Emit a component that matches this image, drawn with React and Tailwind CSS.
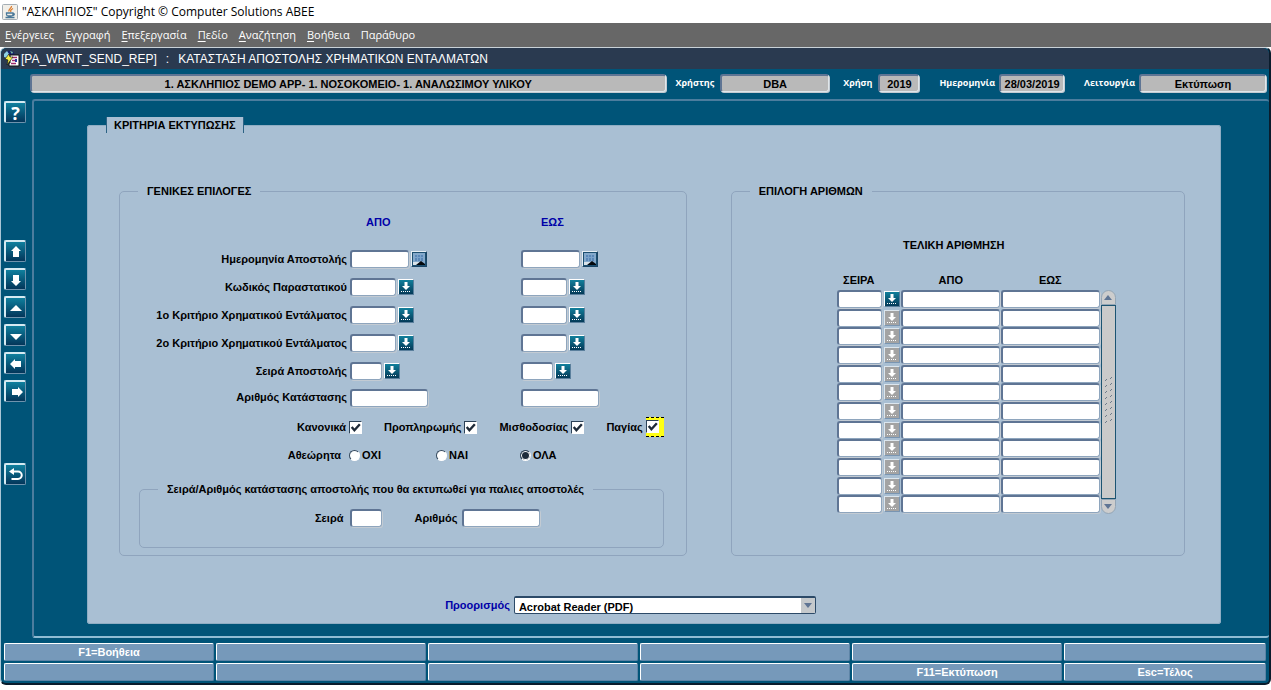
import { useState } from 'react';

const MENU = ['Ενέργειες', 'Εγγραφή', 'Επεξεργασία', 'Πεδίο', 'Αναζήτηση', 'Βοήθεια'];

const FUNCTION_KEYS = [
    'F1=Βοήθεια', '', '', '', '', '',
    '', '', '', '', 'F11=Εκτύπωση', 'Esc=Τέλος',
];

const RANGE_ROWS = [
    { id: 'date', label: 'Ημερομηνία Αποστολής', width: 'w-[59px]', picker: 'calendar' },
    { id: 'doc', label: 'Κωδικός Παραστατικού', width: 'w-[46px]', picker: 'list' },
    { id: 'crit1', label: '1ο Κριτήριο Χρηματικού Εντάλματος', width: 'w-[46px]', picker: 'list' },
    { id: 'crit2', label: '2ο Κριτήριο Χρηματικού Εντάλματος', width: 'w-[46px]', picker: 'list' },
    { id: 'series', label: 'Σειρά Αποστολής', width: 'w-8', picker: 'list' },
    { id: 'number', label: 'Αριθμός Κατάστασης', width: 'w-[78px]', picker: null },
];

const NAV_ICONS = [
    { name: 'Προηγούμενη εγγραφή', d: 'M8 2l5 5h-2v6H5V7H3z' },
    { name: 'Επόμενη εγγραφή', d: 'M8 14l5-5h-2V3H5v6H3z' },
    { name: 'Προηγούμενη σελίδα', d: 'M8 5l6 6H2z' },
    { name: 'Επόμενη σελίδα', d: 'M8 12l6-6H2z' },
    { name: 'Προηγούμενο πεδίο', d: 'M2 8l5-5v2h6v6H7v2z' },
    { name: 'Επόμενο πεδίο', d: 'M15 8l-5-5v2H4v6h6v2z' },
];

const FRAME = 'h-[18px] rounded-[3px] border-t-2 border-l-2 border-r border-b border-t-[#5f7594] border-l-[#5f7594] shadow-[1px_1px_0_#c3cbd3] outline-none';
const FIELD = `${FRAME} border-r-[#8ea5bd] border-b-[#8ea5bd] bg-white px-1`;
const INFO = `${FRAME} border-r-[#dfe6ea] border-b-[#dfe6ea] bg-[#b9b9b9] text-center`;

function JavaIcon() {
    return (
        <svg width="16" height="16" viewBox="0 0 16 16" aria-hidden="true">
            <rect x="0.5" y="0.5" width="15" height="15" rx="1" fill="#f1efe9" stroke="#a5aeb5" />
            <path d="M9.500 2C10 4 6 5 7 7.500M11 4.500C9 5.500 8 6.500 9 8" fill="none" stroke="#dd7a28" strokeWidth="1.300" />
            <path d="M4.500 9h6.500v1.500c0 1-1 1.500-2 1.500H6.500c-1 0-2-.5-2-1.500zM11 9.500c2 0 1.500 2-.5 2M3.500 13.500h9" fill="none" stroke="#4a7898" strokeWidth="1.300" />
        </svg>
    );
}

function FormIcon() {
    return (
        <svg width="17" height="17" viewBox="0 0 17 17" aria-hidden="true">
            <circle cx="7" cy="5" r="4.500" fill="#15206b" />
            <path d="M1 4l3-3 2 3-2 4-3-1z" fill="#8fd0e6" />
            <path d="M7 1l3 1-1 2z" fill="#7fc4a0" />
            <path d="M7 5h9v11H6v-3h1z" fill="#fff" stroke="#111" />
            <path d="M9 7.500h5M9 10.500h5M8 13.500h5" stroke="#a02c6c" strokeWidth="1.500" />
            <path d="M12 9h2v3h-2z" fill="#2b39a0" />
            <path d="M2 9l4-5 1 3h3l-6 8 1-5z" fill="#f6ef4a" stroke="#111" strokeWidth="0.600" />
        </svg>
    );
}

function ListButton({ label, disabled }) {
    return (
        <button
            type="button"
            aria-label={label}
            disabled={disabled}
            className={`block size-4 shrink-0 border ${disabled
                ? 'border-t-[#dce6ee] border-l-[#dce6ee] border-r-[#7995b2] border-b-[#7995b2] bg-[#a3a3a3]'
                : 'border-t-white border-l-white border-r-[#5a7f9c] border-b-[#5a7f9c] bg-linear-to-b from-[#12809c] to-[#053a58]'
                }`}
        >
            <svg width="14" height="14" viewBox="0 0 14 14" aria-hidden="true">
                <path d="M5.500 2h3v4H11L7 10 3 6h2.500z" fill="#fff" />
                <path d="M2 11.500h10" stroke="#fff" strokeDasharray="1 1" />
            </svg>
        </button>
    );
}

function CalendarButton({ label }) {
    return (
        <button type="button" aria-label={label} className="block size-4 shrink-0 border border-t-[#e6eef4] border-l-[#e6eef4] border-r-[#1b4566] border-b-[#1b4566] bg-[#1d4f70]">
            <svg width="14" height="14" viewBox="0 0 14 14" aria-hidden="true">
                <path d="M1 1h12v12H1z" fill="#84a9cb" />
                <path d="M3 3h8v6H3z" fill="#5b88b8" />
                <path d="M3 5.500h8M5.500 3v6M8.500 3v6" stroke="#7ba3cb" />
                <path d="M1 10h7l-3 3H1z" fill="#d9e3ea" />
                <path d="M4 13l5-4 4 3v1z" fill="#05080c" />
            </svg>
        </button>
    );
}

function NavButton({ label, children }) {
    return (
        <button
            type="button"
            aria-label={label}
            className="grid size-[22px] place-items-center rounded-xs border-t-2 border-l-2 border-r border-b border-t-[#d5eaf2] border-l-[#d5eaf2] border-r-[#6f93ad] border-b-[#6f93ad] bg-linear-to-b from-[#10809e] to-[#04365a]"
        >
            {children}
        </button>
    );
}

function RangeCell({ row, side, label }) {
    return (
        <div className="flex items-center gap-[2px]">
            <input id={`${row.id}-${side}`} type="text" aria-label={`${row.label} ${label}`} className={`${FIELD} ${row.width}`} />
            {row.picker === 'calendar' && <CalendarButton label="Ημερολόγιο" />}
            {row.picker === 'list' && <ListButton label="Λίστα τιμών" />}
        </div>
    );
}

function Check({ label, focused }) {
    return (
        <label className="flex h-5 items-center gap-[3px]">
            {label}
            <span className={focused ? 'h-5 w-[18px] border-y border-dashed border-black bg-[#ffff14] pt-[2px]' : ''}>
                <span className="grid size-[13px]">
                    <input type="checkbox" defaultChecked className="peer col-start-1 row-start-1 size-[13px] appearance-none border border-t-[#2c4258] border-l-[#2c4258] border-r-white border-b-white bg-white" />
                    <svg viewBox="0 0 12 12" className="pointer-events-none invisible col-start-1 row-start-1 size-[13px] peer-checked:visible" aria-hidden="true">
                        <path d="M2.500 5.500l2.500 3L10 3" fill="none" stroke="#1e2a38" strokeWidth="2.200" />
                    </svg>
                </span>
            </span>
        </label>
    );
}

function Radio({ label, value, current, onChange }) {
    return (
        <label className="flex items-center gap-[2px]">
            <input
                type="radio"
                name="unviewed"
                value={value}
                checked={current === value}
                onChange={() => onChange(value)}
                className="size-[11px] appearance-none rounded-full border border-t-[#33475c] border-l-[#33475c] border-r-white border-b-white bg-white checked:bg-[#1f2d3c] checked:shadow-[inset_0_0_0_1px_white]"
            />
            {label}
        </label>
    );
}

function InfoField({ id, label, value, width, space }) {
    return (
        <div className={`flex items-center ${space}`}>
            <label htmlFor={id} className="font-['Open_Sans',sans-serif] text-[9px] text-white">{label}</label>
            <input id={id} readOnly value={value} className={`${INFO} ${width}`} />
        </div>
    );
}

function GeneralOptions() {
    const [unviewed, setUnviewed] = useState('all');

    return (
        <fieldset className="h-[373px] rounded-[5px] border border-[#8fa4bd] pl-[18px]">
            <legend className="h-4 px-[9px] leading-4">ΓΕΝΙΚΕΣ ΕΠΙΛΟΓΕΣ</legend>

            <div className="-ml-[18px] grid grid-cols-[227px_168px_1fr] auto-rows-[28px] items-center gap-x-[3px] pt-[9px]">
                <span />
                <span className="pl-4 text-[#0000a8]">ΑΠΟ</span>
                <span className="pl-5 text-[#0000a8]">ΕΩΣ</span>
            </div>
            <div className="-ml-[18px] grid grid-cols-[227px_168px_1fr] grid-rows-[28px_28px_28px_28px_28px_25px] items-center gap-x-[3px] pt-[9px]">
                {RANGE_ROWS.map((row) => (
                    <div key={row.id} className="contents">
                        <label htmlFor={`${row.id}-from`} className="text-right whitespace-nowrap">{row.label}</label>
                        <RangeCell row={row} side="from" label="από" />
                        <RangeCell row={row} side="to" label="έως" />
                    </div>
                ))}
            </div>

            <div className="mt-[7px] mr-[22px] flex justify-between pl-[159px]">
                <Check label="Κανονικά" />
                <Check label="Προπληρωμής" />
                <Check label="Μισθοδοσίας" />
                <Check label="Παγίας" focused />
            </div>

            <div role="radiogroup" aria-label="Αθεώρητα" className="-ml-[18px] mt-2 grid h-5 grid-cols-[221px_79px_76px_1fr] items-center gap-x-2">
                <span className="text-right">Αθεώρητα</span>
                <Radio label="ΟΧΙ" value="no" current={unviewed} onChange={setUnviewed} />
                <Radio label="ΝΑΙ" value="yes" current={unviewed} onChange={setUnviewed} />
                <Radio label="ΟΛΑ" value="all" current={unviewed} onChange={setUnviewed} />
            </div>

            <fieldset className="mt-4 mr-[22px] ml-px h-[67px] rounded-[5px] border border-[#8fa4bd] pl-[18px]">
                <legend className="h-4 px-[9px] leading-4 whitespace-nowrap">Σειρά/Αριθμός κατάστασης αποστολής που θα εκτυπωθεί για παλιες αποστολές</legend>
                <div className="flex items-center pt-3 pl-[157px]">
                    <label htmlFor="old-series">Σειρά</label>
                    <input id="old-series" type="text" className={`${FIELD} ml-[7px] w-8`} />
                    <label htmlFor="old-number" className="ml-8">Αριθμός</label>
                    <input id="old-number" type="text" className={`${FIELD} ml-[5px] w-[78px]`} />
                </div>
            </fieldset>
        </fieldset>
    );
}

function Scrollbar() {
    return (
        <div className="flex h-[224px] w-[15px] flex-col">
            <button type="button" aria-label="Πάνω" className="grid h-[15px] place-items-center rounded-t-full border border-[#93a5b5] bg-[#cdcdcd]">
                <svg width="8" height="5" viewBox="0 0 8 5" aria-hidden="true"><path d="M0 5l4-5 4 5z" fill="#5f7594" /></svg>
            </button>
            <div className="grid flex-1 place-items-center border border-[#1c5472] bg-[#cacaca]">
                <svg width="9" height="52" viewBox="0 0 9 52" aria-hidden="true">
                    {Array.from({ length: 8 }, (_, i) => (
                        <path key={i} d={`M1 ${i * 6 + 5}l2-2M6 ${i * 6 + 3}l2-2`} stroke="#6d7b8a" />
                    ))}
                </svg>
            </div>
            <button type="button" aria-label="Κάτω" className="grid h-[15px] place-items-center rounded-b-full border border-[#93a5b5] bg-[#cdcdcd]">
                <svg width="8" height="5" viewBox="0 0 8 5" aria-hidden="true"><path d="M0 0l4 5 4-5z" fill="#5f7594" /></svg>
            </button>
        </div>
    );
}

function NumberSelection() {
    return (
        <fieldset className="h-[373px] rounded-[5px] border border-[#8fa4bd] pl-[18px]">
            <legend className="h-4 px-[9px] leading-4">ΕΠΙΛΟΓΗ ΑΡΙΘΜΩΝ</legend>
            <div className="flex items-end gap-px pt-[38px] pl-[87px]">
                <table className="border-collapse">
                    <caption className="h-[35px] pr-[29px] text-center leading-4">ΤΕΛΙΚΗ ΑΡΙΘΜΗΣΗ</caption>
                    <thead>
                        <tr className="h-[18px]">
                            <th className="w-[47px] p-0 pr-[3px] align-top leading-4">ΣΕΙΡΑ</th>
                            <th className="w-[17px] p-0" />
                            <th className="w-[100px] p-0 align-top leading-4">ΑΠΟ</th>
                            <th className="w-[99px] p-0 align-top leading-4">ΕΩΣ</th>
                        </tr>
                    </thead>
                    <tbody className="h-[224px]">
                        {Array.from({ length: 12 }, (_, i) => (
                            <tr key={i}>
                                <td className="p-0 align-top"><input type="text" aria-label={`Σειρά ${i + 1}`} className={`${FIELD} block w-[45px]`} /></td>
                                <td className="p-0 pt-px align-top"><ListButton label="Λίστα τιμών" disabled={i > 0} /></td>
                                <td className="p-0 align-top"><input type="text" aria-label={`Από ${i + 1}`} className={`${FIELD} block w-[99px]`} /></td>
                                <td className="p-0 align-top"><input type="text" aria-label={`Έως ${i + 1}`} className={`${FIELD} block w-[99px]`} /></td>
                            </tr>
                        ))}
                    </tbody>
                </table>
                <Scrollbar />
            </div>
        </fieldset>
    );
}

export default function App() {
    return (
        <div className="min-h-screen bg-white font-['Liberation_Sans',Arial,sans-serif] text-[11px] font-bold text-black">
            <header className="flex h-[23px] items-center gap-1 pl-[2px] font-['Open_Sans',sans-serif] text-xs font-normal">
                <JavaIcon />
                <h1>"ΑΣΚΛΗΠΙΟΣ" Copyright © Computer Solutions ABEE</h1>
            </header>

            <nav className="flex h-6 items-center gap-[11px] bg-[#676767] pl-[5px] font-['Open_Sans',sans-serif] font-normal text-white">
                {MENU.map((item) => (
                    <button key={item} type="button" className="whitespace-nowrap">
                        <span className="underline underline-offset-2">{item[0]}</span>{item.slice(1)}
                    </button>
                ))}
                <button type="button">Παράθυρο</button>
            </nav>

            <main className="rounded-md border-t border-r-2 border-b-2 border-l border-t-[#c9d2d8] border-r-[#0a1c2c] border-b-[#0a1c2c] border-l-[#a9c6d6] bg-[#005478]">
                <h2 className="flex h-[21px] items-center rounded-t-md bg-[#2a3a50] pl-[2px] text-xs font-normal whitespace-pre text-white">
                    <FormIcon />
                    <span className="pl-px">[PA_WRNT_SEND_REP]</span>
                    <span className="pl-[9px]">:</span>
                    <span className="pl-[9px]">ΚΑΤΑΣΤΑΣΗ ΑΠΟΣΤΟΛΗΣ ΧΡΗΜΑΤΙΚΩΝ ΕΝΤΑΛΜΑΤΩΝ</span>
                </h2>

                <div className="flex h-[30px] items-center pr-[3px] pb-[2px] pl-[29px]">
                    <input aria-label="Εφαρμογή" readOnly value="1. ΑΣΚΛΗΠΙΟΣ DEMO APP- 1. ΝΟΣΟΚΟΜΕΙΟ- 1. ΑΝΑΛΩΣΙΜΟΥ ΥΛΙΚΟΥ" className={`${INFO} min-w-0 flex-1`} />
                    <InfoField id="user" label="Χρήστης" value="DBA" width="w-[109px]" space="ml-[10px] gap-[6px]" />
                    <InfoField id="year" label="Χρήση" value="2019" width="w-[41px]" space="ml-[14px] gap-[6px]" />
                    <InfoField id="today" label="Ημερομηνία" value="28/03/2019" width="w-[65px]" space="ml-5 gap-1" />
                    <InfoField id="mode" label="Λειτουργία" value="Εκτύπωση" width="w-[127px]" space="ml-5 gap-1" />
                </div>

                <div className="flex">
                    <aside className="flex w-[31px] shrink-0 flex-col pt-[2px] pl-[3px]">
                        <NavButton label="Βοήθεια">
                            <span className="font-['Open_Sans',sans-serif] text-[18px] leading-none text-white">?</span>
                        </NavButton>
                        <div className="mt-[117px] flex flex-col gap-[6px]">
                            {NAV_ICONS.map((icon) => (
                                <NavButton key={icon.name} label={icon.name}>
                                    <svg width="16" height="16" viewBox="0 0 16 16" aria-hidden="true">
                                        <path d={icon.d} fill="#fff" />
                                    </svg>
                                </NavButton>
                            ))}
                        </div>
                        <div className="mt-[61px]">
                            <NavButton label="Επιστροφή">
                                <svg width="16" height="16" viewBox="0 0 16 16" aria-hidden="true">
                                    <path d="M3 4.500h7a3.500 3.500 0 0 1 0 7.500H3.500" fill="none" stroke="#fff" strokeWidth="2" />
                                    <path d="M1 4.500L6 1v7z" fill="#fff" />
                                </svg>
                            </NavButton>
                        </div>
                    </aside>

                    <form className="flex-1 rounded-[3px] border-t-2 border-b-2 border-l-2 border-t-[#4c7d9e] border-b-[#8fbcd3] border-l-[#4c7d9e] pt-4 pr-12 pb-3 pl-[53px]">
                        <fieldset className="rounded-[3px] border border-[#8fadc3] bg-[#a9bfd3] pl-[18px]">
                            <legend className="h-4 border-x border-[#2c6284] bg-[#a9bfd3] px-[7px] leading-4 whitespace-nowrap">ΚΡΙΤΗΡΙΑ ΕΚΤΥΠΩΣΗΣ</legend>
                            <div className="-ml-[18px] grid grid-cols-[5fr_4fr] gap-x-11 pt-[50px] pr-[35px] pl-[31px]">
                                <GeneralOptions />
                                <NumberSelection />
                            </div>
                            <div className="-ml-[18px] flex items-center justify-center gap-1 pt-10 pb-[9px] pr-[47px]">
                                <label htmlFor="target" className="text-[#0000a8]">Προορισμός</label>
                                <div className="grid w-[302px]">
                                    <select id="target" className="col-start-1 row-start-1 h-[18px] appearance-none rounded-xs border border-t-2 border-[#2c4a68] bg-white pt-[2px] pl-1 leading-[15px]">
                                        <option>Acrobat Reader (PDF)</option>
                                    </select>
                                    <span className="pointer-events-none col-start-1 row-start-1 mt-[2px] mr-px grid h-[15px] w-[14px] place-items-center justify-self-end bg-[#c5c9cc]">
                                        <svg width="8" height="5" viewBox="0 0 8 5" aria-hidden="true"><path d="M0 0l4 5 4-5z" fill="#5f7594" /></svg>
                                    </span>
                                </div>
                            </div>
                        </fieldset>
                    </form>
                </div>

                <footer className="grid grid-cols-[26fr_26fr_26fr_26fr_26fr_25fr] gap-[2px] pt-[5px] pr-[3px] pb-[2px] pl-[3px] text-white">
                    {FUNCTION_KEYS.map((key, i) => (
                        <button key={i} type="button" aria-label={key || `Κενό πλήκτρο ${i + 1}`} className="h-[18px] rounded-[2px] border border-t-white border-r-[#5d84a6] border-b-[#5d84a6] border-l-white bg-[#7699ba] leading-4">
                            {key}
                        </button>
                    ))}
                </footer>
            </main>
        </div>
    );
}
